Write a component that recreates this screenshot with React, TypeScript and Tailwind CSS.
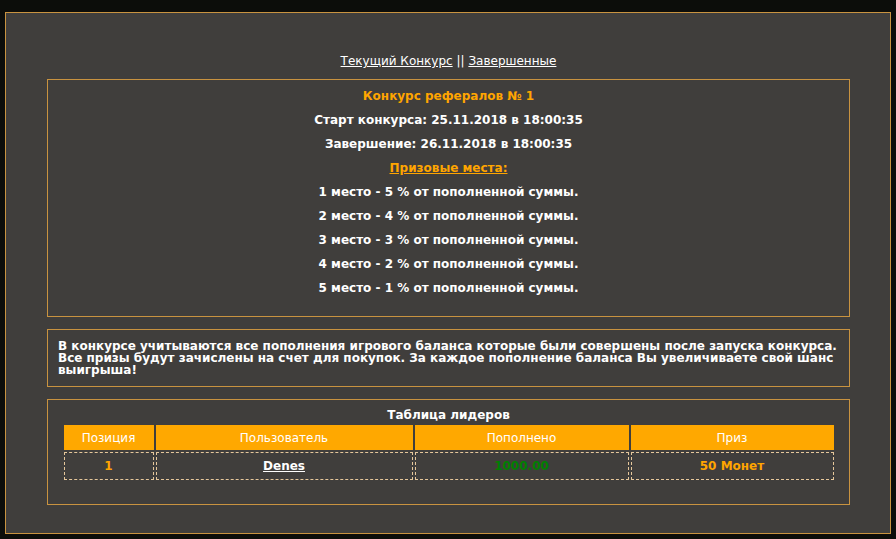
const places = [
  "1 место - 5 % от пополненной суммы.",
  "2 место - 4 % от пополненной суммы.",
  "3 место - 3 % от пополненной суммы.",
  "4 место - 2 % от пополненной суммы.",
  "5 место - 1 % от пополненной суммы.",
];

export default function App() {
  return (
    <div className="min-h-screen bg-[#0c0d0a] pt-[12px] pb-[6px] pl-[5px] pr-[5px] font-['DejaVu_Sans',Verdana,sans-serif] text-white">
      {/* Main panel */}
      <div className="border border-[#c99340] bg-[#403e3c] pl-[41px] pr-[40px] pt-[40px] pb-[28px]">
        <div className="text-center text-[12px] leading-[16px]">
          <a href="#" className="underline">Текущий Конкурс</a> || <a href="#" className="underline">Завершенные</a>
        </div>

        {/* Contest info */}
        <div className="mt-[10px] border border-[#c99340] pt-[4px] pb-[16px] text-center text-[12px] font-bold">
          <div className="leading-[24px] text-[#ffa500]">Конкурс рефералов № 1</div>
          <div className="leading-[24px]">Старт конкурса: 25.11.2018 в 18:00:35</div>
          <div className="leading-[24px]">Завершение: 26.11.2018 в 18:00:35</div>
          <div className="leading-[24px]">
            <span className="text-[#ffa500] underline">Призовые места:</span>
          </div>
          {places.map((p) => (
            <div key={p} className="leading-[24px]">{p}</div>
          ))}
        </div>

        {/* Rules */}
        <div className="mt-[12px] border border-[#c99340] px-[10px] pt-[10px] pb-[10px] text-[12px] font-bold leading-[12px]">
          В конкурсе учитываются все пополнения игрового баланса которые были совершены после запуска конкурса. Все призы будут зачислены на счет для покупок. За каждое пополнение баланса Вы увеличиваете свой шанс выигрыша!
        </div>

        {/* Leaders */}
        <div className="mt-[12px] border border-[#c99340] pt-[8px] pb-[22px]">
          <div className="text-center text-[12px] font-bold leading-[15px]">Таблица лидеров</div>
          <table className="mx-auto w-[774px] border-separate border-spacing-[2px] text-center text-[12px]">
            <thead>
              <tr className="bg-[#ffa800]">
                <th className="w-[90px] h-[25px] font-normal">Позиция</th>
                <th className="w-[257px] font-normal">Пользователь</th>
                <th className="w-[214px] font-normal">Пополнено</th>
                <th className="font-normal">Приз</th>
              </tr>
            </thead>
            <tbody>
              <tr className="font-bold">
                <td className="h-[28px] border border-dashed border-[#e6c79b] text-[#ffa500]">1</td>
                <td className="border border-dashed border-[#e6c79b]">
                  <a href="#" className="underline">Denes</a>
                </td>
                <td className="border border-dashed border-[#e6c79b] text-[#008000]">1000.00</td>
                <td className="border border-dashed border-[#e6c79b] text-[#ffa500]">50 Монет</td>
              </tr>
            </tbody>
          </table>
        </div>
      </div>
    </div>
  );
}
